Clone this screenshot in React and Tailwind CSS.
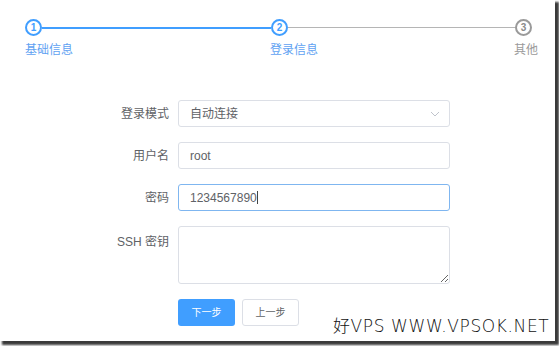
import React from "react";

const font = { fontFamily: '"Liberation Sans", "Noto Sans CJK SC", sans-serif' };

const StepCircle = ({ n, active }) => (
  <div
    className={`w-[17px] h-[17px] rounded-full border-2 flex items-center justify-center text-[10px] font-bold shrink-0 ${
      active ? "border-[#409eff] text-[#409eff]" : "border-[#9a9a9a] text-[#8a8a8a]"
    }`}
  >
    {n}
  </div>
);

const Row = ({ label, children, top }) => (
  <div className={`flex ${top ? "items-start" : "items-center"}`}>
    <div className={`w-[178px] pr-[9px] text-right text-[12px] text-[#606266] ${top ? "pt-[7px]" : ""}`}>
      {label}
    </div>
    {children}
  </div>
);

export default function App() {
  return (
    <div className="w-[559px] h-[346px] bg-white overflow-hidden" style={font}>
      <div className="relative w-[555px] h-[341px] bg-white shadow-[3px_3px_2px_1px_#3a3a3a]">
        {/* steps */}
        <div className="pt-[19px] pl-[25px]">
          <div className="flex items-center">
            <StepCircle n="1" active />
            <div className="w-[229px] h-[2px] bg-[#409eff]" />
            <StepCircle n="2" active />
            <div className="w-[227px] h-px bg-[#b5b5b5]" />
            <StepCircle n="3" />
          </div>
          <div className="flex mt-[6px] text-[12px] leading-[16px]">
            <div className="w-[245px] text-[#5fa2f2]">基础信息</div>
            <div className="w-[244px] text-[#5fa2f2]">登录信息</div>
            <div className="text-[#9a9a9a]">其他</div>
          </div>
        </div>

        {/* form */}
        <div className="mt-[42px] flex flex-col gap-[15px]">
          <Row label="登录模式">
            <div className="w-[272px] h-[27px] border border-[#dcdfe6] rounded-[3px] flex items-center justify-between pl-[11px] pr-[9px] text-[12px] text-[#606266]">
              <span>自动连接</span>
              <svg width="10" height="6" viewBox="0 0 10 6" fill="none">
                <path d="M1 1l4 4 4-4" stroke="#c0c4cc" strokeWidth="1" />
              </svg>
            </div>
          </Row>
          <Row label="用户名">
            <div className="w-[272px] h-[27px] border border-[#dcdfe6] rounded-[3px] flex items-center pl-[11px] text-[12px] text-[#606266]">
              root
            </div>
          </Row>
          <Row label="密码">
            <div className="w-[272px] h-[27px] border border-[#7fb6f0] rounded-[3px] flex items-center pl-[11px] text-[12px] text-[#606266]">
              1234567890
              <span className="w-px h-[13px] bg-[#444]" />
            </div>
          </Row>
          <Row label="SSH 密钥" top>
            <textarea
              readOnly
              className="w-[272px] h-[58px] border border-[#dcdfe6] rounded-[3px] outline-none"
            />
          </Row>
          <div className="flex pl-[178px] gap-[7px]">
            <div className="w-[57px] h-[27px] rounded-[3px] bg-[#409eff] text-white text-[10px] flex items-center justify-center">
              下一步
            </div>
            <div className="w-[57px] h-[27px] rounded-[3px] border border-[#dcdfe6] text-[#606266] text-[10px] flex items-center justify-center">
              上一步
            </div>
          </div>
        </div>

        {/* watermark */}
        <div
          className="absolute left-[333px] top-[316px] whitespace-nowrap text-[17px] leading-[20px] tracking-[0.6px] text-[#111]"
          style={{ fontFamily: '"DejaVu Sans", "Noto Sans CJK SC", sans-serif', fontWeight: 300 }}
        >
          好VPS WWW.VPSOK.NET
        </div>
      </div>
    </div>
  );
}
